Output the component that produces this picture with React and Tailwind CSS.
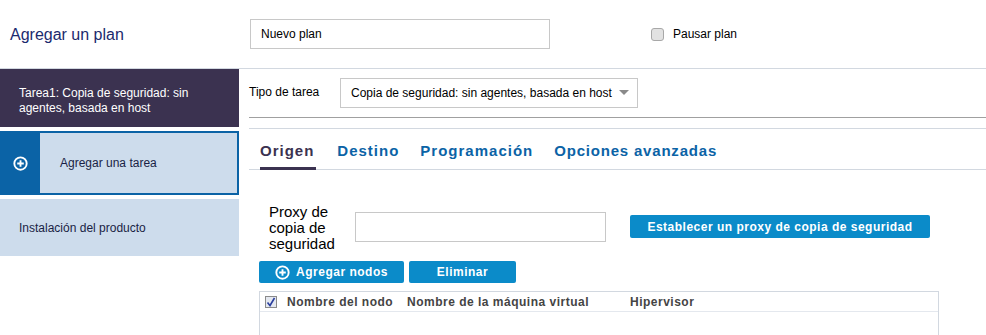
const font = { fontFamily: '"Liberation Sans", Arial, sans-serif' };

function PlusCircle({ size = 14 }) {
  return (
    <svg width={size} height={size} viewBox="0 0 16 16" fill="none">
      <circle cx="8" cy="8" r="6.6" stroke="white" strokeWidth="2" />
      <path d="M8 4.5v7M4.5 8h7" stroke="white" strokeWidth="2" />
    </svg>
  );
}

export default function App() {
  return (
    <div className="w-[986px] h-[335px] overflow-hidden bg-white text-[12px] text-black" style={font}>
      {/* Header */}
      <div className="flex items-center h-[69px] border-b border-[#d2d8e0]">
        <div className="w-[250px] pl-[10px] text-[16px] text-[#1b2a6e] pt-[1px]">Agregar un plan</div>
        <div className="w-[300px] h-[30px] border border-[#c8c8c8] flex items-center pl-[10px] text-[12px]">
          Nuevo plan
        </div>
        <div className="ml-[101px] flex items-center">
          <span className="w-[13px] h-[13px] rounded-[3px] border border-[#a8a8a8] bg-[#e2e2e2]" />
          <span className="ml-[9px]">Pausar plan</span>
        </div>
      </div>

      {/* Body */}
      <div className="flex">
        {/* Sidebar */}
        <div className="w-[239px] shrink-0">
          <div className="h-[58px] bg-[#3b3250] text-white text-[12px] leading-[15px] pl-[19px] flex flex-col justify-center pt-[5px]">
            <span>Tarea1: Copia de seguridad: sin</span>
            <span>agentes, basada en host</span>
          </div>
          <div className="mt-[4px] h-[64px] border-2 border-[#0b63a6] flex">
            <div className="w-[38px] bg-[#0b63a6] flex items-center justify-center pr-[2px]">
              <PlusCircle size={15} />
            </div>
            <div className="flex-1 bg-[#cddcec] flex items-center pl-[20px] text-[#1a1f45]">Agregar una tarea</div>
          </div>
          <div className="mt-[4px] h-[57px] bg-[#cddcec] flex items-center pl-[19px] text-[#1a1f45]">
            Instalación del producto
          </div>
        </div>

        {/* Main */}
        <div className="flex-1 pl-[10px]">
          <div className="h-[49px] flex items-center border-b border-[#a0a0a0]">
            <span className="w-[91px] pb-[2px]">Tipo de tarea</span>
            <div className="w-[298px] h-[30px] border border-[#c8c8c8] flex items-center pl-[10px] pr-[8px] justify-between">
              <span>Copia de seguridad: sin agentes, basada en host</span>
              <svg width="10" height="6" viewBox="0 0 10 6">
                <path d="M0 0h10L5 5z" fill="#8a8a8a" />
              </svg>
            </div>
          </div>

          <div className="mt-[10px] border-t border-[#d2d8e0] h-[42px] flex items-end border-b border-b-[#d2d8e0] pl-[11px]">
            <div className="flex gap-[21px] text-[15px] font-bold tracking-[1px]">
              <span className="text-[#3b3250] border-b-[3px] border-[#3b3250] pb-[4px] -mb-[1px] pr-[2px]">Origen</span>
              <span className="text-[#0b63a6] pb-[7px]">Destino</span>
              <span className="text-[#0b63a6] pb-[7px]">Programación</span>
              <span className="text-[#0b63a6] pb-[7px] tracking-[0.8px]">Opciones avanzadas</span>
            </div>
          </div>

          {/* Proxy */}
          <div className="flex items-start mt-[35px] pl-[20px]">
            <div className="w-[86px] text-[15px] leading-[16px] -mt-[1px]">
              Proxy de
              <br />
              copia de
              <br />
              seguridad
            </div>
            <div className="w-[251px] h-[30px] border border-[#c8c8c8] mt-[7px]" />
            <button className="ml-[24px] mt-[10px] w-[300px] h-[23px] bg-[#0b8bc9] rounded-[2px] text-white font-bold text-[12px] tracking-[0.5px]">
              Establecer un proxy de copia de seguridad
            </button>
          </div>

          <div className="flex gap-[5px] mt-[9px] pl-[10px]">
            <button className="w-[145px] h-[22px] bg-[#0b8bc9] rounded-[2px] text-white font-bold text-[12px] tracking-[0.5px] flex items-center justify-center gap-[6px]">
              <PlusCircle size={15} />
              Agregar nodos
            </button>
            <button className="w-[107px] h-[22px] bg-[#0b8bc9] rounded-[2px] text-white font-bold text-[12px] tracking-[0.5px]">
              Eliminar
            </button>
          </div>

          {/* Table */}
          <div className="ml-[10px] mt-[8px] w-[680px] h-[60px] border border-[#d2d8e0] border-b-0">
            <div className="h-[20px] flex items-center border-b border-[#e4e8ee] text-[#444] font-bold tracking-[0.5px]">
              <span className="ml-[5px] w-[12px] h-[12px] border border-[#8a8a8a] bg-[#e4e8f0] flex items-center justify-center">
                <svg width="10" height="10" viewBox="0 0 10 10">
                  <path d="M1.5 5.5l2.5 3 4.5-7.5" stroke="#2b3f9e" strokeWidth="1.6" fill="none" />
                </svg>
              </span>
              <span className="ml-[10px] w-[120px]">Nombre del nodo</span>
              <span className="w-[223px]">Nombre de la máquina virtual</span>
              <span>Hipervisor</span>
            </div>
          </div>
        </div>
      </div>
    </div>
  );
}
